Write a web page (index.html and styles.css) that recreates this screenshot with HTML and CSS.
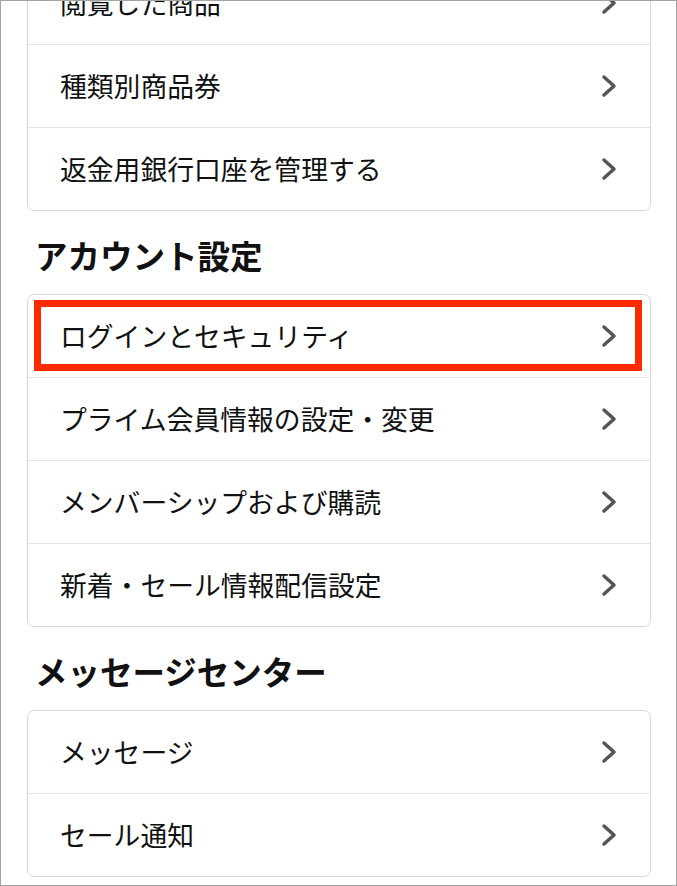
FILE: index.html
```html
<!DOCTYPE html>
<html lang="ja">
<head>
<meta charset="utf-8">
<title>アカウント</title>
<link rel="stylesheet" href="styles.css">
</head>
<body>
<div class="frame">
  <div class="scroll">
    <ul class="card">
      <li class="row"><span class="label">閲覧した商品</span><svg class="chev" viewBox="0 0 16 24"><polyline points="3,3 13,12 3,21"/></svg></li>
      <li class="row"><span class="label">種類別商品券</span><svg class="chev" viewBox="0 0 16 24"><polyline points="3,3 13,12 3,21"/></svg></li>
      <li class="row"><span class="label">返金用銀行口座を管理する</span><svg class="chev" viewBox="0 0 16 24"><polyline points="3,3 13,12 3,21"/></svg></li>
    </ul>

    <h2 class="heading">アカウント設定</h2>
    <ul class="card">
      <li class="row highlighted"><span class="label">ログインとセキュリティ</span><svg class="chev" viewBox="0 0 16 24"><polyline points="3,3 13,12 3,21"/></svg><span class="mark"></span></li>
      <li class="row"><span class="label">プライム会員情報の設定・変更</span><svg class="chev" viewBox="0 0 16 24"><polyline points="3,3 13,12 3,21"/></svg></li>
      <li class="row"><span class="label">メンバーシップおよび購読</span><svg class="chev" viewBox="0 0 16 24"><polyline points="3,3 13,12 3,21"/></svg></li>
      <li class="row"><span class="label">新着・セール情報配信設定</span><svg class="chev" viewBox="0 0 16 24"><polyline points="3,3 13,12 3,21"/></svg></li>
    </ul>

    <h2 class="heading">メッセージセンター</h2>
    <ul class="card">
      <li class="row"><span class="label">メッセージ</span><svg class="chev" viewBox="0 0 16 24"><polyline points="3,3 13,12 3,21"/></svg></li>
      <li class="row"><span class="label">セール通知</span><svg class="chev" viewBox="0 0 16 24"><polyline points="3,3 13,12 3,21"/></svg></li>
    </ul>
  </div>
</div>
</body>
</html>
```

FILE: styles.css
```css
* { box-sizing: border-box; }

html, body {
  margin: 0;
  padding: 0;
  background: #ffffff;
}

body {
  font-family: "Noto Sans CJK JP", "Noto Sans", sans-serif;
  color: #0f1111;
}

.frame {
  width: 677px;
  height: 886px;
  border: 1px solid #a3a3a3;
  overflow: hidden;
  background: #ffffff;
}

.scroll {
  margin-top: -40px;
  padding: 0 25px 0 26px;
}

.card {
  list-style: none;
  margin: 0;
  padding: 0;
  border: 1px solid #d6d6d6;
  border-radius: 7px;
  background: #ffffff;
}

.row {
  position: relative;
  height: 83px;
  display: flex;
  align-items: center;
  justify-content: space-between;
  padding: 0 33px 0 32px;
  border-top: 1px solid #e3e3e3;
}

.row:first-child {
  height: 82px;
  border-top: none;
}

.label {
  font-size: 26.8px;
  line-height: 1;
  white-space: nowrap;
  padding-top: 1px;
}

.chev {
  width: 16px;
  height: 24px;
  flex: none;
}

.chev polyline {
  fill: none;
  stroke: #555555;
  stroke-width: 3.5;
  stroke-linecap: round;
  stroke-linejoin: round;
}

.heading {
  margin: 24px 0 19px 8px;
  font-size: 32.5px;
  line-height: 40px;
  font-weight: 700;
  color: #111111;
}

.mark {
  position: absolute;
  top: 5px;
  left: 6px;
  right: 8px;
  bottom: 6px;
  border: 7px solid #ff2a00;
  pointer-events: none;
}
```
